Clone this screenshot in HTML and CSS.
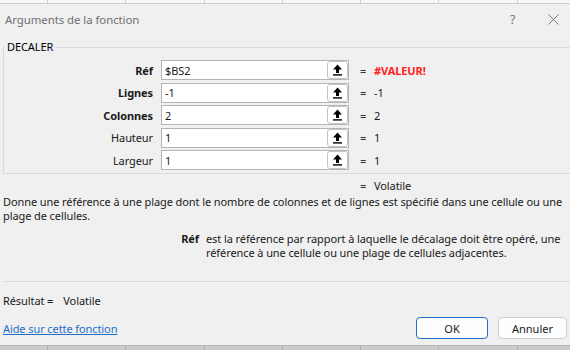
FILE: index.html
```html
<!DOCTYPE html>
<html lang="fr">
<head>
<meta charset="utf-8">
<link rel="stylesheet" href="styles.css">
</head>
<body>
<div class="sheet sheet-top"><span class="c0"></span><span></span><span></span><span></span><span></span><span></span><span></span><span></span></div>
<div class="dialog">
  <div class="titlebar">
    <span class="title">Arguments de la fonction</span>
    <span class="help">?</span>
    <span class="close"><svg width="11" height="11" viewBox="0 0 11 11"><path d="M0.5 0.5 L10.5 10.5 M10.5 0.5 L0.5 10.5" stroke="#7a7a7a" stroke-width="1" fill="none"/></svg></span>
  </div>
  <fieldset class="group">
    <legend>DECALER</legend>
    <div class="args">
      <span class="lbl bold">Réf</span>
      <div class="field"><span class="input-text">$BS2</span><span class="pick"><svg width="11" height="12" viewBox="0 0 11 12"><path d="M5.5 0.5 L10 5.5 L7 5.5 L7 9 L4 9 L4 5.5 L1 5.5 Z" fill="#000"/><rect x="1" y="10.2" width="9" height="1.4" fill="#000"/></svg></span></div>
      <span class="eq">=</span><span class="val err">#VALEUR!</span>

      <span class="lbl bold">Lignes</span>
      <div class="field"><span class="input-text">-1</span><span class="pick"><svg width="11" height="12" viewBox="0 0 11 12"><path d="M5.5 0.5 L10 5.5 L7 5.5 L7 9 L4 9 L4 5.5 L1 5.5 Z" fill="#000"/><rect x="1" y="10.2" width="9" height="1.4" fill="#000"/></svg></span></div>
      <span class="eq">=</span><span class="val">-1</span>

      <span class="lbl bold">Colonnes</span>
      <div class="field"><span class="input-text">2</span><span class="pick"><svg width="11" height="12" viewBox="0 0 11 12"><path d="M5.5 0.5 L10 5.5 L7 5.5 L7 9 L4 9 L4 5.5 L1 5.5 Z" fill="#000"/><rect x="1" y="10.2" width="9" height="1.4" fill="#000"/></svg></span></div>
      <span class="eq">=</span><span class="val">2</span>

      <span class="lbl">Hauteur</span>
      <div class="field"><span class="input-text">1</span><span class="pick"><svg width="11" height="12" viewBox="0 0 11 12"><path d="M5.5 0.5 L10 5.5 L7 5.5 L7 9 L4 9 L4 5.5 L1 5.5 Z" fill="#000"/><rect x="1" y="10.2" width="9" height="1.4" fill="#000"/></svg></span></div>
      <span class="eq">=</span><span class="val">1</span>

      <span class="lbl">Largeur</span>
      <div class="field"><span class="input-text">1</span><span class="pick"><svg width="11" height="12" viewBox="0 0 11 12"><path d="M5.5 0.5 L10 5.5 L7 5.5 L7 9 L4 9 L4 5.5 L1 5.5 Z" fill="#000"/><rect x="1" y="10.2" width="9" height="1.4" fill="#000"/></svg></span></div>
      <span class="eq">=</span><span class="val">1</span>
    </div>
  </fieldset>
  <div class="volatile"><span class="eq">=</span><span class="val">Volatile</span></div>
  <p class="desc">Donne une référence à une plage dont le nombre de colonnes et de lignes est spécifié dans une cellule ou une plage de cellules.</p>
  <div class="argdesc"><span class="bold">Réf</span><span class="argtext">est la référence par rapport à laquelle le décalage doit être opéré, une référence à une cellule ou une plage de cellules adjacentes.</span></div>
  <div class="sep"></div>
  <div class="result">Résultat =<span class="result-val">Volatile</span></div>
  <div class="footer">
    <a class="help-link" href="#">Aide sur cette fonction</a>
    <div class="buttons">
      <button class="btn ok">OK</button>
      <button class="btn">Annuler</button>
    </div>
  </div>
</div>
<div class="sheet sheet-bottom"><span class="c0"></span><span></span><span></span><span></span><span></span><span></span><span></span><span></span></div>
</body>
</html>
```
FILE: styles.css
```css
* { box-sizing: border-box; }
html, body { margin: 0; padding: 0; }
body {
  width: 570px;
  height: 350px;
  overflow: hidden;
  background: #f0f0f0;
  font-family: "Noto Sans", "Open Sans", sans-serif;
  font-size: 11px;
  letter-spacing: -0.09px;
  color: #1a1a1a;
}
.sheet {
  display: flex;
  overflow: hidden;
  white-space: nowrap;
}
.sheet span {
  flex: 0 0 78.3px;
  border-right: 1px solid #d2d2d2;
}
.sheet span.c0 { flex-basis: 48px; }
.sheet-top {
  height: 3px;
  background: #f8f8f8;
}
.sheet-bottom {
  height: 5px;
  background: #cbcbcb;
  border-top: 1px solid #b5b5b5;
}
.sheet-bottom span { border-right-color: #b0b0b0; }

.dialog {
  height: 342px;
  border-top: 1px solid #cfcfcf;
  background: #f0f0f0;
  overflow: hidden;
}
.titlebar {
  height: 30px;
  display: flex;
  align-items: center;
  padding-left: 5px;
}
.title {
  flex: 1;
  font-size: 11.4px;
  letter-spacing: -0.05px;
  color: #6f6f6f;
}
.help {
  font-size: 12.5px;
  color: #7a7a7a;
  width: 38px;
}
.close {
  width: 20px;
  margin-right: 2px;
  display: flex;
  align-items: center;
  padding-top: 1px;
}

.group {
  margin: 5px 0 0 3px;
  padding: 0 0 3px 0;
  width: 620px;
  border: 1px solid #dadada;
  min-width: 0;
}
.group legend {
  margin-left: 1px;
  padding: 0 2px;
  line-height: 16px;
  color: #000;
}
.args {
  padding-top: 5px;
  display: grid;
  grid-template-columns: 157px 199px 14px 1fr;
  row-gap: 2.5px;
  align-items: center;
}
.lbl {
  text-align: right;
  padding-right: 8px;
  color: #1a1a1a;
}
.bold { font-weight: 700; }
.field {
  width: 188px;
  height: 20px;
  background: #fff;
  border: 1px solid #b4b4b4;
  display: flex;
  align-items: center;
}
.input-text {
  flex: 1;
  padding-left: 3px;
}
.pick {
  width: 21px;
  height: 18px;
  border: 1px solid #c4c4c4;
  border-radius: 3px;
  background: #fff;
  display: flex;
  align-items: center;
  justify-content: center;
}
.eq { color: #333; }
.val { color: #1a1a1a; }
.err { color: #ff2020; font-weight: 700; }

.volatile {
  margin-top: 5px;
  padding-left: 360px;
  line-height: 14px;
  display: flex;
}
.volatile .eq { width: 14px; }

.desc {
  margin: 2px 0 0 3px;
  width: 567px;
  line-height: 14px;
}
.argdesc {
  margin-top: 9px;
  display: grid;
  grid-template-columns: 199px 360px;
  column-gap: 7px;
  line-height: 14px;
}
.argdesc .bold { text-align: right; }

.sep {
  margin: 21px 0 0 3px;
  height: 1px;
  background: #dcdcdc;
}
.result {
  margin: 12px 0 0 3px;
  line-height: 14px;
}
.result-val { margin-left: 10px; }

.footer {
  margin: 9px 0 0 3px;
  height: 22px;
  display: flex;
  align-items: center;
}
.help-link {
  flex: 1;
  color: #1f6fc9;
  text-decoration: underline;
}
.buttons {
  display: flex;
  gap: 10px;
  margin-right: 3px;
}
.btn {
  width: 69px;
  height: 22px;
  font-family: inherit;
  font-size: 11px;
  color: #1a1a1a;
  background: #fdfdfd;
  border: 1px solid #cfcfcf;
  border-radius: 4px;
  padding: 0;
}
.btn.ok {
  width: 72px;
  border: 1px solid #1a6fc9;
}
```
